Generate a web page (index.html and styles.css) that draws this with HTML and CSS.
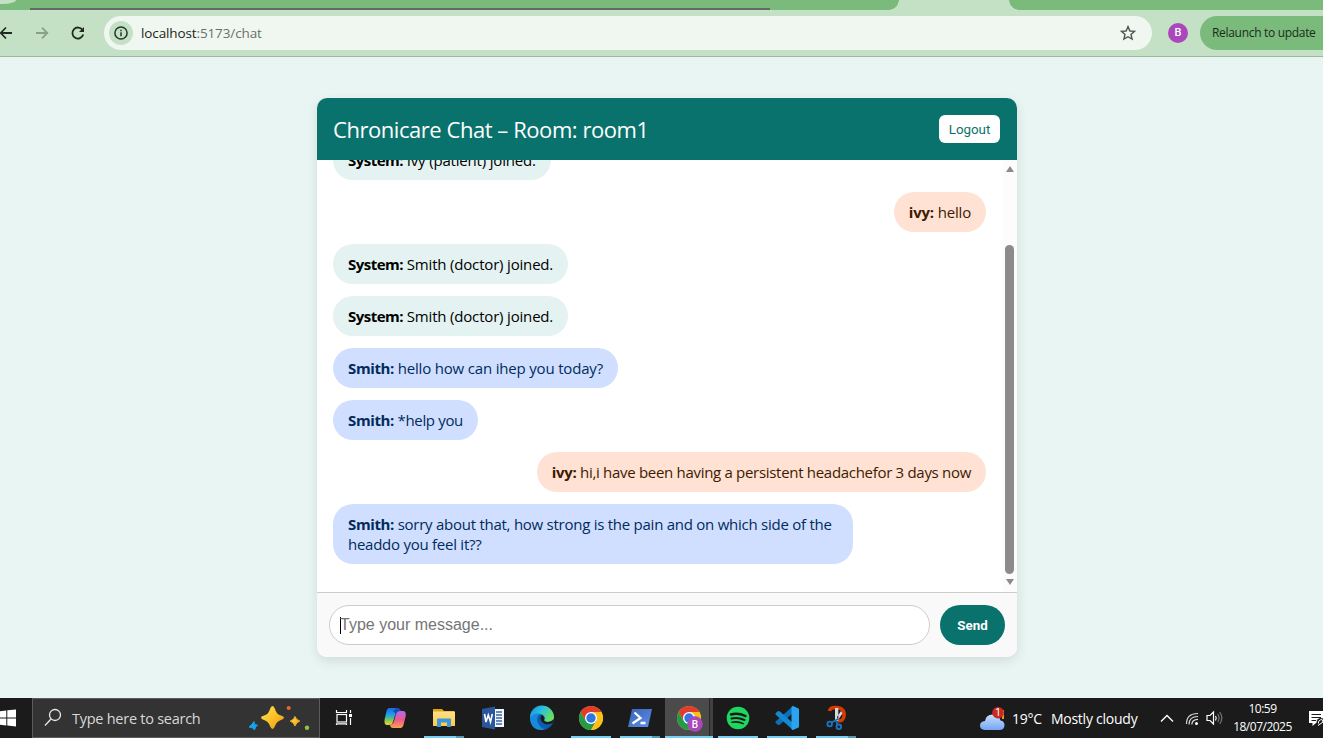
FILE: index.html
```html
<!DOCTYPE html>
<html lang="en">
<head>
<meta charset="utf-8">
<title>Chronicare Chat</title>
<link rel="stylesheet" href="styles.css">
</head>
<body>
<header class="browser">
  <div class="tabstrip"><span class="tab-corner"></span><span class="tab-line"></span><span class="tab-active"></span></div>
  <div class="toolbar">
    <svg class="nav-icons" width="104" height="40" viewBox="0 0 104 40" fill="none" stroke-width="1.8">
      <path d="M12 20H1.500M6 14.500L.7 20L6 25.500" stroke="#1f2a21"/>
      <path d="M36 20H47M42 14.700L47.300 20L42 25.300" stroke="#87a087"/>
      <path d="M82.500 17A5.500 5.500 0 1 0 83.200 21.500" stroke="#1f2a21"/><path d="M84 14V19H79Z" fill="#1f2a21"/>
    </svg>
    <div class="address">
      <span class="site-info"><svg width="14" height="14" viewBox="0 0 14 14" fill="none" stroke="#26352a" stroke-width="1.500"><circle cx="7" cy="7" r="6.100"/><path d="M7 6.300V10.300M7 3.700V5.200"/></svg></span>
      <span class="url"><b>localhost</b>:5173/chat</span>
      <svg class="star" width="16" height="16" viewBox="0 0 16 16" fill="none" stroke="#4e5850" stroke-width="1.400"><path d="M8 1.600L9.900 6L14.600 6.400L11 9.500L12.100 14.100L8 11.700L3.900 14.100L5 9.500L1.400 6.400L6.100 6Z"/></svg>
    </div>
    <span class="profile">B</span>
    <span class="relaunch">Relaunch to update</span>
  </div>
</header>
<main class="page">
  <section class="chat">
    <div class="chat-head"><h1>Chronicare Chat – Room: room1</h1><button class="logout">Logout</button></div>
    <div class="chat-body">
      <div class="messages">
        <div class="msg system"><b>System:</b><span> Ivy (patient) joined.</span></div>
        <div class="msg patient"><b>ivy:</b><span> hello</span></div>
        <div class="msg system"><b>System:</b><span> Smith (doctor) joined.</span></div>
        <div class="msg system"><b>System:</b><span> Smith (doctor) joined.</span></div>
        <div class="msg doctor"><b>Smith:</b><span> hello how can ihep you today?</span></div>
        <div class="msg doctor tight"><b>Smith:</b><span> *help you</span></div>
        <div class="msg patient snug"><b>ivy:</b><span> hi,i have been having a persistent headachefor 3 days now</span></div>
        <div class="msg doctor wide"><b>Smith:</b><span> sorry about that, how strong is the pain and on which side of the<br>headdo you feel it??</span></div>
      </div>
      <div class="scrollbar"><i class="arrow up"></i><i class="thumb"></i><i class="arrow down"></i></div>
    </div>
    <div class="composer"><div class="field"><i class="caret"></i><span>Type your message...</span></div><button class="send">Send</button></div>
  </section>
</main>
<footer class="taskbar">
  <svg class="start" width="32" height="40" viewBox="0 0 32 40" fill="#fff"><path d="M0 13.200L6.300 12.500V19.500H0ZM7.300 12.300L16 11.500V19.500H7.300ZM0 20.500H6.300V27.500L0 26.700ZM7.300 20.500H16V28.500L7.300 27.600Z"/></svg>
  <div class="search">
    <svg width="18" height="20" viewBox="0 0 18 20" fill="none" stroke="#e8e8e8" stroke-width="1.300"><circle cx="11" cy="7" r="5.500"/><path d="M7 11L1 17.500"/></svg>
    <span class="search-text">Type here to search</span>
    <svg class="sparks" width="64" height="38" viewBox="248 699 64 38">
      <defs><linearGradient id="gold" x1="0" y1="0" x2="1" y2="1"><stop offset="0" stop-color="#ffe05a"/><stop offset=".55" stop-color="#fbbf24"/><stop offset="1" stop-color="#e98a1d"/></linearGradient></defs>
      <path d="M272.500 706Q274 706 275 709Q276.500 714.500 281 715.500Q284 716.300 284 717.500Q284 719 281 720Q276.500 721.500 275 726Q274 729 272.500 729Q271 729 270 726Q268.500 721.500 264 720Q261 719 261 717.500Q261 716.300 264 715.500Q268.500 714.500 270 709Q271 706 272.500 706Z" fill="url(#gold)"/>
      <path d="M295 716.500Q296.200 720.300 499.500 721Z" fill="none"/><path d="M295 716.500Q296.200 720.200 299.800 721Q296.200 722.200 295 726Q293.800 722.200 290.200 721Q293.800 720.200 295 716.500Z" fill="url(#gold)" stroke="#f7b52a"/>
      <path d="M254 721.500L254.500 724.500L257.500 725.200L255.500 727L254.500 730L252.500 727.800L249 727L251.500 724.800Z" fill="#16a4ee" stroke="#16a4ee"/>
      <circle cx="288.700" cy="708" r="2.100" fill="#ef6330"/><circle cx="307" cy="727.800" r="2.200" fill="#8cc63f"/>
    </svg>
  </div>
  <svg class="apps" width="540" height="40" viewBox="320 698 540 40">
    <defs>
      <linearGradient id="cpA" x1="0" y1="0" x2="0" y2="1"><stop offset="0" stop-color="#1d65e8"/><stop offset=".45" stop-color="#20a9e0"/><stop offset=".7" stop-color="#7bc65a"/><stop offset="1" stop-color="#f5d52a"/></linearGradient>
      <linearGradient id="cpB" x1="0" y1="0" x2="0" y2="1"><stop offset="0" stop-color="#ad6bf0"/><stop offset=".5" stop-color="#ee5790"/><stop offset="1" stop-color="#ffa04f"/></linearGradient>
      <linearGradient id="edA" x1="0" y1="0" x2="1" y2=".5"><stop offset="0" stop-color="#1689df"/><stop offset=".5" stop-color="#2bbfe0"/><stop offset="1" stop-color="#69df5d"/></linearGradient>
      <linearGradient id="fold" x1="0" y1="0" x2="0" y2="1"><stop offset="0" stop-color="#ffe08a"/><stop offset="1" stop-color="#fbc947"/></linearGradient>
      <linearGradient id="ps" x1="0" y1="0" x2="1" y2="1"><stop offset="0" stop-color="#3763b5"/><stop offset="1" stop-color="#5f8fe8"/></linearGradient>
      <g id="chrome"><circle r="12" fill="#fbc116"/><path d="M-10.400 -6A12 12 0 0 1 10.400 -6H0L-5.200 3Z" fill="#e33b2e"/><path d="M-10.400 -6A12 12 0 0 0 0 12L5.200 3L-5.200 3Z" fill="#259b49"/><path d="M10.400 -6A12 12 0 0 1 0 12L5.200 3L0 -6Z" fill="#fbc116"/><circle r="6" fill="#fff"/><circle r="4.700" fill="#2f77e6"/></g>
    </defs>
    <g stroke="#fff" stroke-width="1.200" fill="none"><rect x="337" y="714.500" width="9.500" height="7.500"/><path d="M336.500 710V712.500H346.500V710M336.500 725V723.800H346.500V725M350.500 710V713M350.500 718V725"/></g><rect x="349" y="714" width="3" height="3" fill="#fff"/>
    <path d="M389 708H397Q399.500 708 400.500 711.500L397 712.500Q395.500 713 394.500 717L393 722Q392 725 389 725H387Q384 725 384.500 720L386.500 711Q387.300 708 389 708Z" fill="url(#cpA)"/>
    <path d="M401 728H393Q390.500 728 389.800 724.500Q393.200 724.500 394 721L396 714Q397 711 400 711H403Q406.300 711 405.700 716L403.500 725Q402.500 728 401 728Z" fill="url(#cpB)"/>
    <path d="M397 708Q400 708 401 711H400Q397 711 396 714L393 711Z" fill="#194bb2"/>
    <path d="M433 709H442L444 711H454V714H433Z" fill="#e4a20b"/><path d="M433 711.500H455V726H433Z" fill="url(#fold)"/><path d="M437 727V719Q437 718.500 438 718.500H450Q451 718.500 451 719V727H447V722.500H441V727Z" fill="#3e96dc"/>
    <rect x="492" y="709" width="12" height="18" fill="#f2f6fd"/><path d="M496 712H502M496 715H502M496 718H502M496 721H502M496 724H502" stroke="#3c65a8" stroke-width="1.300"/><path d="M482 709L495 706.500V729.500L482 727Z" fill="#2b579a"/><path d="M484.500 714L486 722L488.300 715L490.500 722L492.300 714" fill="none" stroke="#fff" stroke-width="1.600"/>
    <circle cx="542" cy="718" r="12" fill="#0c5bae"/><path d="M530 718A12 12 0 0 1 554 717Q554 722 548 722.500Q543.500 722.500 544 720Q546 718 543.500 715.500Q538 711 530 718Z" fill="url(#edA)"/><path d="M530 718Q534 712 540 714Q535.500 717 538 723Q540.500 728 545 729.500Q531 732 530 718Z" fill="#178bdb"/><path d="M542 714.500Q539 718 542 722Q546 726 552.500 723L554 719Q550 723 545.500 721.500Q543.500 720.500 544.500 718Z" fill="#1b1b1b"/>
    <use href="#chrome" x="591" y="718"/>
    <path d="M632 709H652L648 727H628Z" fill="url(#ps)"/><path d="M634.500 712.500L640.500 718L632.500 723.500M640.500 723H645.500" stroke="#fff" stroke-width="2.300" fill="none"/>
    <rect x="665" y="698" width="44" height="40" fill="#4b4b4b"/><rect x="709" y="698" width="4" height="40" fill="#414141"/><path d="M709.500 698V738" stroke="#272727"/>
    <use href="#chrome" x="689" y="718"/><circle cx="695" cy="724" r="7.700" fill="#ab47bc"/><text x="695" y="727.800" text-anchor="middle" class="badge-b">B</text>
    <circle cx="738" cy="718" r="11.300" fill="#1ed760"/><g fill="none" stroke="#191919" stroke-linecap="round"><path d="M731 714.500Q738 712.500 745.500 716" stroke-width="2.400"/><path d="M731.500 718.500Q738 717 744.500 720" stroke-width="2"/><path d="M732 722.300Q738 721 743.300 723.600" stroke-width="1.600"/></g>
    <path d="M793 706V713L780 724.500Q778.500 725.500 777.500 724.500L775.500 722.700V721.500Z" fill="#0a70b8"/><path d="M793 730V723L780 711.500Q778.500 710.500 777.500 711.500L775.500 713.200V714.500Z" fill="#1588d0"/><path d="M793 706L799 708.800V727.200L793 730Q792 730 791.500 729V707Q792 706 793 706Z" fill="#2ba4f0"/>
    <path d="M829.500 711Q830 707 837 707.500Q845 708.500 844 716Q843 722 838 720.500" fill="none" stroke="#d83b01" stroke-width="3.600"/><path d="M835 708H838.300V721H835ZM838 720L842.500 713.500L841 711L837 717Z" fill="#d5d8db"/><circle cx="829.700" cy="724" r="2.300" fill="none" stroke="#1976c5" stroke-width="1.800"/><circle cx="838.800" cy="726.800" r="2.300" fill="none" stroke="#1976c5" stroke-width="1.800"/><path d="M831.500 722.500L838 719M837.500 724.500L836 720.500" stroke="#1976c5" stroke-width="1.800"/>
    <path d="M424 737H456M571 737H611M620 737H652M665 737H713M718 737H758M767 737H807M816 737H848" stroke="#76d0f5" stroke-width="2"/><path d="M456 737H464M652 737H660M848 737H856" stroke="#5798b3" stroke-width="2"/>
  </svg>
  <div class="tray">
    <svg width="28" height="26" viewBox="979 704 28 26"><defs><linearGradient id="cl" x1="0" y1="0" x2="0" y2="1"><stop offset="0" stop-color="#c8dfff"/><stop offset="1" stop-color="#76a5f4"/></linearGradient></defs><path d="M985 729Q980 728.500 980 724.500Q980 720.500 985 720Q986 713.500 992.500 713.500Q999 713.500 1000.500 719.500Q1004.500 720 1004.500 724.500Q1004 729 999.500 729Z" fill="url(#cl)"/><path d="M1003 709V718" stroke="#f19424" stroke-width="2"/><circle cx="998" cy="711.700" r="5.800" fill="#c92a20"/><text x="998" y="715.300" text-anchor="middle" class="alert-n">1</text></svg>
    <span class="weather"><span>19°C</span><span>Mostly cloudy</span></span>
    <svg class="status" width="66" height="24" viewBox="1158 706 66 24" fill="none" stroke="#fff" stroke-width="1.200"><path d="M1161 721.500L1167 715.500L1173 721.500" stroke-width="1.400"/><path d="M1186.500 724Q1186.500 713.500 1198 713.500M1189 724.500Q1189 716.500 1198 716.500M1191.800 724.500Q1192 719.500 1198 719.300" stroke="#ddd"/><circle cx="1196.500" cy="723.500" r="1.500" fill="#fff" stroke="none"/><path d="M1207 715.500H1210L1213.500 712V724L1210 720.500H1207Z"/><path d="M1215.500 716Q1217 718 1215.500 720.500"/><path d="M1217.700 714Q1220.500 718 1217.700 722M1219.700 712Q1224 718 1219.700 724" stroke="#777"/></svg>
    <div class="clock"><span>10:59</span><span>18/07/2025</span></div>
    <svg class="notes" width="14" height="18" viewBox="1309 709 14 18"><path d="M1309 711H1323V723H1316L1312.500 726V723H1309Z" fill="#fff"/><path d="M1311.500 714.500H1321M1311.500 717.500H1321M1311.500 720.500H1316" stroke="#1b1b1b"/><circle cx="1321" cy="722.500" r="4.500" fill="#1b1b1b"/><path d="M1318.500 723.500Q1318 720 1322 719.500L1323 722M1318 725.500L1323 722" fill="none" stroke="#fff"/></svg>
  </div>
</footer>
</body>
</html>
```
FILE: styles.css
```css
* { box-sizing: border-box; }
body { margin: 0; width: 1323px; height: 738px; overflow: hidden; display: flex; flex-direction: column; background: #e8f5f3; font-family: "Open Sans", "Noto Sans", sans-serif; }
button { border: 0; padding: 0; }
.browser { height: 57px; background: #c5e1c5; border-bottom: 1px solid #9fb6a0; }
.tabstrip { height: 10px; background: #7aba7b; position: relative; }
.tab-corner { position: absolute; left: 0; top: 0; width: 16px; height: 4px; background: #c5e1c5; border-bottom-right-radius: 14px 4px; }
.tab-line { position: absolute; left: 30px; top: 8px; width: 740px; height: 2px; background: #646866; }
.tab-active { position: absolute; left: 889px; top: 0; width: 130px; height: 10px; background: radial-gradient(circle at 0 0, #7aba7b 9.500px, transparent 10px), radial-gradient(circle at 100% 0, #7aba7b 9.500px, transparent 10px), #c5e1c5; }
.toolbar { height: 46px; display: flex; align-items: center; }
.nav-icons { flex: none; }
.address { width: 1048px; height: 34px; border-radius: 17px; background: #f0f7f0; display: flex; align-items: center; padding: 0 16px 0 5px; }
.site-info { width: 24px; height: 24px; border-radius: 50%; background: #c5e1c5; display: flex; align-items: center; justify-content: center; }
.url { margin-left: 8px; font-size: 13.500px; letter-spacing: -.12px; color: #6a716b; }
.url b { font-weight: 400; color: #1f2420; }
.star { margin-left: auto; }
.profile { width: 20px; height: 20px; border-radius: 50%; background: #ab47bc; color: #fff; font: 500 11px/20px Roboto, sans-serif; text-align: center; margin: 0 12px 0 16px; }
.relaunch { width: 123px; height: 34px; border-radius: 17px 0 0 17px; background: #7aba7b; padding-left: 12px; font-size: 12px; letter-spacing: -.31px; line-height: 33px; color: #1c2b1d; white-space: nowrap; }
.page { height: 641px; padding: 41px 0 0 317px; }
.chat { width: 700px; height: 559px; border-radius: 10px; overflow: hidden; box-shadow: 0 4px 12px rgba(0,0,0,.1); background: #fff; }
.chat-head { height: 62px; background: #0a726c; color: #fff; display: flex; align-items: center; justify-content: space-between; padding: 0 17px 0 16px; }
h1 { margin: 0; font-size: 22px; letter-spacing: -.45px; line-height: 30px; font-weight: 400; white-space: nowrap; }
.logout { width: 61px; height: 28px; border-radius: 6px; background: #fff; color: #0a726c; font: 400 13.330px Roboto, sans-serif; }
.chat-body { height: 432px; display: flex; }
.messages { width: 685px; overflow: hidden; display: flex; flex-direction: column; justify-content: flex-end; gap: 12px; padding: 0 16px 28px; }
.msg { flex: none; align-self: flex-start; padding: 10px 15px; border-radius: 20px; font-size: 15px; line-height: 20px; white-space: nowrap; letter-spacing: -.18px; }
.msg span { white-space: pre; }
.system { background: #e4f2f1; color: #000; }
.system b { letter-spacing: -.51px; }
.doctor { background: #d0dfff; color: #002b5c; }
.doctor b { letter-spacing: -.37px; }
.patient { background: #ffe2d4; color: #3d1a00; align-self: flex-end; }
.tight { letter-spacing: -.34px; }
.snug { letter-spacing: -.3px; }
.wide { width: 520px; letter-spacing: -.255px; }
.scrollbar { width: 15px; background: #fcfcfc; display: flex; flex-direction: column; align-items: center; padding: 6px 0; }
.thumb { width: 9px; height: 329px; margin-top: 73px; border-radius: 5px; background: #8b8b8b; }
.arrow { width: 0; height: 0; border: 4.500px solid transparent; }
.up { border-top: 0; border-bottom: 6px solid #8b8b8b; }
.down { border-bottom: 0; border-top: 6px solid #8b8b8b; margin-top: 5px; }
.composer { height: 65px; border-top: 1px solid #ccc; background: #f9f9f9; display: flex; align-items: center; gap: 10px; padding: 0 12px; }
.field { width: 601px; height: 40px; border: 1px solid #ccc; border-radius: 20px; background: #fff; display: flex; align-items: center; padding-left: 10px; font: 16px "Liberation Sans", sans-serif; color: #757575; }
.caret { width: 1px; height: 17px; margin-right: -1px; background: #000; }
.send { width: 65px; height: 40px; border-radius: 20px; background: #0a726c; color: #fff; font: 700 13.330px Roboto, sans-serif; }
.taskbar { height: 40px; background: #1b1b1b; display: flex; }
.start { flex: none; }
.search { width: 288px; height: 40px; flex: none; background: #333; border: 1px solid #5c5c5c; display: flex; align-items: center; padding: 0 7px 0 11px; color: #d8d8d8; font-size: 14.500px; letter-spacing: -.26px; }
.search-text { margin-left: 10px; white-space: nowrap; }
.sparks { margin-left: auto; }
.apps { flex: none; }
.badge-b { font: 500 10px Roboto, sans-serif; fill: #fff; }
.alert-n { font: 10px Roboto, sans-serif; fill: #fff; }
.tray { width: 463px; display: flex; align-items: center; padding-left: 119px; color: #fff; }
.tray svg { flex: none; }
.weather { display: flex; gap: 9px; margin-left: 5px; width: 146px; font-size: 14px; letter-spacing: -.24px; white-space: nowrap; }
.clock { width: 69px; margin-left: 4px; display: flex; flex-direction: column; align-items: center; font-size: 12px; letter-spacing: -.5px; line-height: 18px; }
.notes { margin-left: auto; }
```
